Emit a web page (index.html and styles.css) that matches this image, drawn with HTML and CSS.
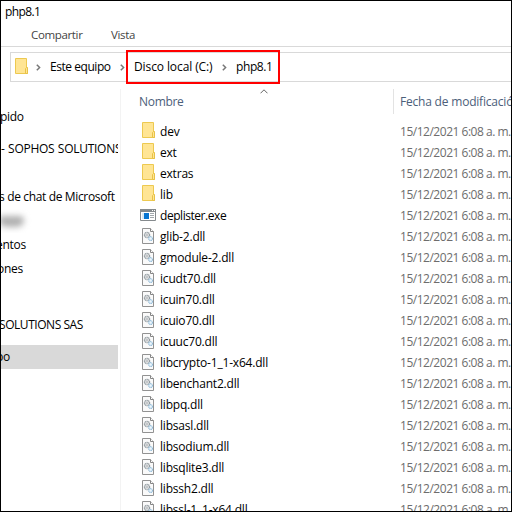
FILE: index.html
```
<!DOCTYPE html>
<html lang="es">
<head>
<meta charset="utf-8">
<title>php8.1</title>
<link rel="stylesheet" href="styles.css">
</head>
<body>
<svg class="defs" width="0" height="0">
  <symbol id="folder" viewBox="0 0 14 17">
    <path d="M.5.5h11v9.500h1v5.500H.5z" fill="#ffe594" stroke="#edc950"/>
    <path d="M10.500 15.500v-5l1-1h1v6z" fill="#ffe594" stroke="#e8c247"/>
  </symbol>
  <symbol id="dll" viewBox="0 0 13 16">
    <path d="M.5.5h8l3 3v12H.5z" fill="#fafafa" stroke="#929292"/>
    <path d="M8.500.5v3h3" fill="#fff" stroke="#858585"/>
    <circle cx="5" cy="7" r="2.600" fill="#eee" stroke="#929ba0" stroke-width="1.300" stroke-dasharray="1.200 .45"/>
    <circle cx="5" cy="7" r="1" fill="#fff" stroke="#9aa1a5" stroke-width=".7"/>
    <circle cx="8.600" cy="10.500" r="1.900" fill="#edf6fc" stroke="#94bcd8" stroke-width="1.200" stroke-dasharray="1.100 .35"/>
  </symbol>
  <symbol id="exe" viewBox="0 0 16 12">
    <path d="M.5.5h15v11H.5z" fill="#fff" stroke="#858a8d"/>
    <path d="M0 0h16v3H0z" fill="#858a8d"/>
    <path d="M12 1h1v1h-1zM14 1h1v1h-1z" fill="#fff"/>
    <path d="M2 4h7v6H2z" fill="#d9e9f5"/><path d="M4 4h5v6H4z" fill="#0875d1"/>
    <path d="M10 4.500h4M10 6.500h4M10 8.500h4" stroke="#a2a8ac"/>
  </symbol>
  <symbol id="chev" viewBox="0 0 5 7"><path d="M.8.7l2.800 2.800L.8 6.300" fill="none" stroke="#777" stroke-width="1.500"/></symbol>
</svg>
<div class="window">
  <div class="title">php8.1</div>
  <div class="menu"><span class="share">Compartir</span><span class="view">Vista</span></div>
  <div class="address">
    <div class="bar">
      <svg class="folder"><use href="#folder"/></svg>
      <svg class="chev c1"><use href="#chev"/></svg>
      <span class="crumb pc">Este equipo</span>
      <svg class="chev c2"><use href="#chev"/></svg>
      <span class="crumb disk">Disco local (C:)</span>
      <svg class="chev c3"><use href="#chev"/></svg>
      <span class="crumb php">php8.1</span>
    </div>
    <div class="highlight"></div>
  </div>
  <div class="main">
    <nav class="side">
      <div class="nav quick"><span>pido</span></div>
      <div class="nav sophos"><span>- SOPHOS SOLUTIONS</span></div>
      <div class="nav chat"><span>s de chat de Microsoft</span></div>
      <div class="nav hidden"><i class="smudge"></i></div>
      <div class="nav docs"><span>entos</span></div>
      <div class="nav pics"><span>ones</span></div>
      <div class="nav sas"><span>SOLUTIONS SAS</span></div>
      <div class="nav selected"><span>po</span></div>
    </nav>
    <section class="files">
      <div class="head">
        <span class="name">Nombre</span><span class="date">Fecha de modificación</span>
        <svg class="sort" viewBox="0 0 8 5"><path d="M.5 4.300L4 .8l3.500 3.500" fill="none" stroke="#666"/></svg>
      </div>
      <div class="rows" id="rows"></div>
    </section>
  </div>
</div>
<script src="files.js"></script>
</body>
</html>
```
FILE: styles.css
```
* { box-sizing: border-box; }
body { margin: 0; background: #fff; font: 12px/16px "Open Sans", "Noto Sans", sans-serif; color: #000; }
.defs { position: absolute; }
svg { display: block; flex: none; }
.window { width: 512px; height: 512px; border: 1px solid #000; overflow: hidden; white-space: nowrap; }
.title { height: 23px; padding: 3px 0 0 4px; letter-spacing: -.6px; }
.menu { height: 23px; display: flex; border-bottom: 1px solid #d9d9d9; padding: 3px 0 0 30px; color: #444; font-size: 11.5px; letter-spacing: -.35px; }
.share { width: 80px; }
.address { position: relative; height: 42px; padding: 5px 0 0 9px; }
.bar { height: 30px; width: 510px; display: flex; align-items: center; border: 1px solid #d9d9d9; }
.folder { width: 14px; height: 17px; }
.bar .folder { margin: -1px 0 0 4px; }
.chev { width: 5px; height: 7px; margin-top: 1px; }
.c1 { margin-left: 7px; }
.crumb { letter-spacing: -.2px; }
.pc { width: 70px; margin-left: 9px; letter-spacing: -.45px; }
.disk { width: 88px; margin-left: 9px; letter-spacing: -.1px; }
.php { margin-left: 9px; letter-spacing: -.4px; }
.highlight { position: absolute; left: 125px; top: 3px; width: 154px; height: 34px; border: 2px solid #f00; }
.main { display: flex; height: 422px; }
.side { width: 120px; padding-top: 16px; border-right: 1px solid #f3f3f3; }
.nav { height: 24px; width: 117px; display: flex; align-items: center; overflow: hidden; letter-spacing: -.3px; }
.quick span { margin-left: -1px; }
.sophos { margin-top: 8px; }
.sophos span { letter-spacing: -.28px; word-spacing: .7px; }
.chat { margin-top: 24px; letter-spacing: -.35px; }
.chat span { margin-left: -2px; }
.docs span { margin-left: -5px; }
.pics span { margin-left: -4px; }
.sas { margin-top: 32px; letter-spacing: -.45px; }
.sas span { margin-left: -2px; }
.selected { margin-top: 8px; background: #d9d9d9; }
.selected span { margin-left: -5px; }
.smudge { width: 25px; height: 11px; margin-left: -2px; border-radius: 2px 5px 8px 8px; background: #b0b0b0; filter: blur(3px); }
.files { width: 390px; flex: none; }
.head { position: relative; display: flex; height: 25px; color: #4c607a; }
.name { width: 273px; flex: none; padding: 5px 0 0 18px; border-right: 1px solid #e3e3e3; letter-spacing: -.3px; }
.date { padding: 5px 0 0 6px; letter-spacing: -.2px; }
.sort { position: absolute; left: 139px; top: 0; width: 8px; height: 5px; }
.rows { padding-top: 6px; }
.row { height: 21px; display: flex; align-items: center; }
.icon { width: 16px; display: flex; margin-left: 19px; flex: none; }
.icon .folder, .icon .dll { margin-left: 2px; }
.icon .dll { width: 13px; height: 16px; }
.icon .exe { width: 16px; height: 12px; }
.label, .time { padding-top: 2px; }
.label { width: 240px; flex: none; margin-left: 4px; letter-spacing: -.2px; }
.label-exe { letter-spacing: -.45px; }
.time { color: #6d6d6d; letter-spacing: -.48px; }
```
FILE: files.js
```
const files = ['dev', 'ext', 'extras', 'lib', 'deplister.exe', 'glib-2.dll', 'gmodule-2.dll', 'icudt70.dll',
  'icuin70.dll', 'icuio70.dll', 'icuuc70.dll', 'libcrypto-1_1-x64.dll', 'libenchant2.dll', 'libpq.dll',
  'libsasl.dll', 'libsodium.dll', 'libsqlite3.dll', 'libssh2.dll', 'libssl-1_1-x64.dll'];
document.getElementById('rows').innerHTML = files.map(name => {
  const kind = name.endsWith('.dll') ? 'dll' : name.endsWith('.exe') ? 'exe' : 'folder';
  return `<div class="row"><span class="icon"><svg class="${kind}"><use href="#${kind}"/></svg></span>` +
    `<span class="label label-${kind}">${name}</span><span class="time">15/12/2021 6:08 a. m.</span></div>`;
}).join('');
```
